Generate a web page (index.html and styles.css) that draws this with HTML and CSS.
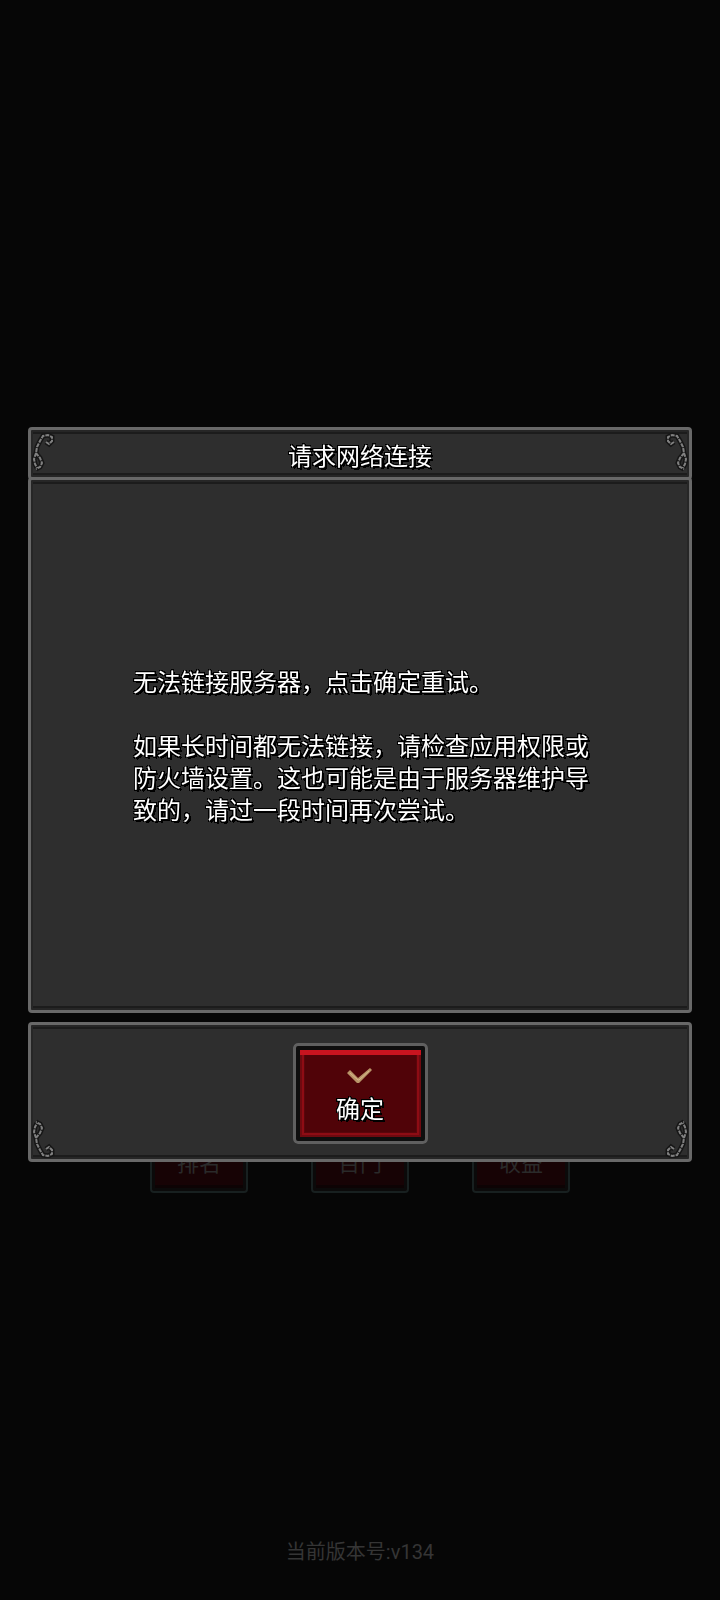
FILE: index.html
```html
<!DOCTYPE html>
<html lang="zh-CN">
<head>
<meta charset="utf-8">
<title>请求网络连接</title>
<link rel="stylesheet" href="styles.css">
</head>
<body>
<svg class="defs" width="0" height="0" aria-hidden="true">
  <filter id="crisp" x="-5%" y="-5%" width="110%" height="110%" color-interpolation-filters="sRGB">
    <feComponentTransfer>
      <feFuncA type="discrete" tableValues="0 1 1"/>
    </feComponentTransfer>
  </filter>
  <symbol id="curl" viewBox="0 0 24 40">
    <path d="M14 9 L17 11 L20 8 L20 4 L16 2 L11 3 L8 8 L5 14 L4 20 L8 25 L10 30 L8 34 L4 36 M4 20 L2 26 L3 31 L5 35" fill="none" stroke="#161616" stroke-width="5"/>
    <path d="M14 9 L17 11 L20 8 L20 4 L16 2 L11 3 L8 8 L5 14 L4 20 L8 25 L10 30 L8 34 L4 36 M4 20 L2 26 L3 31 L5 35" fill="none" stroke="#808080" stroke-width="2" stroke-dasharray="4 1"/>
  </symbol>
</svg>
<main class="screen">
  <div class="backdrop-menu">
    <div class="ghost"><span>排名</span></div>
    <div class="ghost"><span>百门</span></div>
    <div class="ghost"><span>收益</span></div>
  </div>
  <div class="dialog">
    <section class="panel header-panel">
      <svg class="curl tl"><use href="#curl"/></svg>
      <svg class="curl tr"><use href="#curl"/></svg>
      <h1 class="title">请求网络连接</h1>
    </section>
    <section class="panel body-panel">
      <div class="message">
        <p>无法链接服务器，点击确定重试。</p>
        <p>如果长时间都无法链接，请检查应用权限或<br>防火墙设置。这也可能是由于服务器维护导<br>致的，请过一段时间再次尝试。</p>
      </div>
    </section>
    <section class="panel footer-panel">
      <svg class="curl bl"><use href="#curl"/></svg>
      <svg class="curl br"><use href="#curl"/></svg>
      <button class="confirm" type="button">
        <svg class="check" viewBox="0 0 26 18" width="26" height="18"><path d="M0 6 L3 3 L11 11 L23 1 L25 3 L12 16 L10 16 Z" fill="#b89468"/><path d="M3 6 L11 13 L12 13 L22 4" fill="none" stroke="#d8b98c" stroke-width="1"/></svg>
        <span class="confirm-label">确定</span>
      </button>
    </section>
  </div>
  <footer class="version">当前版本号:v134</footer>
</main>
</body>
</html>
```
FILE: styles.css
```css
* { box-sizing: border-box; }
html, body { margin: 0; padding: 0; background: #060606; }
.defs { position: absolute; }
.screen { position: relative; width: 720px; height: 1600px; background: #060606; overflow: hidden; font-family: "Noto Sans CJK SC", sans-serif; }
.backdrop-menu { position: absolute; left: 150px; top: 1120px; width: 420px; display: flex; justify-content: space-between; }
.ghost { width: 98px; height: 73px; border: 2px solid #182020; border-radius: 4px; background: #170305; box-shadow: inset 0 0 0 3px #0b0a0a, inset 0 -6px 0 #0d0304; display: flex; align-items: flex-end; justify-content: center; padding-bottom: 17px; color: #2a2a2a; font-size: 22px; line-height: 26px; }
.dialog { position: absolute; left: 28px; top: 427px; width: 664px; display: flex; flex-direction: column; }
.panel { position: relative; background: #2e2e2e; border: 3px solid #686868; border-radius: 4px; box-shadow: inset 0 0 0 2px #262626, inset 0 4px 0 #1c1c1c, inset 0 -4px 0 #1c1c1c; }
.header-panel { height: 53px; padding-top: 2px; display: flex; align-items: center; justify-content: center; z-index: 1; }
.title { margin: 0; font-size: 24px; line-height: 40px; font-weight: 400; color: #fff; filter: url(#crisp); text-shadow: 1px 1px 0 #000, -1px -1px 0 #000, 1px -1px 0 #000, -1px 1px 0 #000, 2px 2px 0 #000; }
.body-panel { height: 536px; margin-top: -3px; display: flex; align-items: center; }
.message { margin: 0 0 0 102px; width: 470px; font-size: 24px; line-height: 32px; color: #fff; filter: url(#crisp); text-shadow: 1px 1px 0 #000, -1px -1px 0 #000, 1px -1px 0 #000, -1px 1px 0 #000, 2px 2px 0 #000; }
.message p { margin: 0; }
.message p + p { margin-top: 32px; }
.footer-panel { height: 140px; margin-top: 9px; padding-top: 2px; display: flex; align-items: center; justify-content: center; }
.confirm { width: 135px; height: 101px; padding: 3px 0 0; display: flex; flex-direction: column; align-items: center; justify-content: center; background: #500308; border: 7px solid #0e0e0e; outline: 3px solid #606060; outline-offset: -3px; border-radius: 5px; box-shadow: inset 0 5px 0 #c8141f, inset 0 0 0 2px #6e0a10, inset 0 0 0 4px #8e0c14, inset 0 0 0 5px #5a060b; font-family: inherit; }
.check { display: block; }
.confirm-label { margin-top: 8px; font-size: 24px; line-height: 30px; color: #fff; filter: url(#crisp); text-shadow: 1px 1px 0 #000, -1px -1px 0 #000, 1px -1px 0 #000, -1px 1px 0 #000, 2px 2px 0 #000; }
.curl { position: absolute; width: 24px; height: 40px; }
.tl { left: 1px; top: 3px; }
.tr { right: 1px; top: 3px; transform: scaleX(-1); }
.bl { left: 1px; bottom: 1px; transform: scaleY(-1); }
.br { right: 1px; bottom: 1px; transform: scale(-1, -1); }
.version { position: absolute; left: 0; right: 0; top: 1538px; text-align: center; font-family: Roboto, "Noto Sans CJK SC", sans-serif; font-size: 20px; line-height: 28px; color: #353535; }
```
